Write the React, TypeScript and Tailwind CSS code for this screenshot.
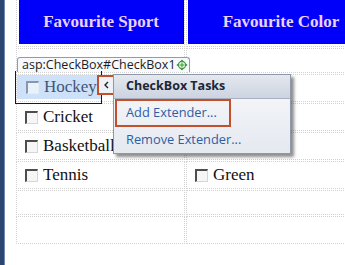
import React from "react";

const Check = ({ light }: { light?: boolean }) => (
  <span
    className={
      light
        ? "inline-block w-[13px] h-[13px] shrink-0 border-t-2 border-l-2 border-b border-r border-t-[#8796ad] border-l-[#8796ad] border-b-[#e3ecf7] border-r-[#e3ecf7] bg-[#e9f1fb]"
        : "inline-block w-[13px] h-[13px] shrink-0 border-t-2 border-l-2 border-b border-r border-t-[#4d4d4d] border-l-[#4d4d4d] border-b-[#d6d6d6] border-r-[#d6d6d6] bg-[#f6f6f6]"
    }
  />
);

const Cell = ({ children, h }: { children?: React.ReactNode; h: string }) => (
  <div className={`border border-dotted border-[#d2d2d2] flex items-center pl-[8px] gap-[5px] ${h}`}>{children}</div>
);

type Row = { h: string; a?: string; b?: string };
const rows: Row[] = [
  { h: "h-[25px]" },
  { h: "h-[28px]" },
  { h: "h-[28px]", a: "Cricket" },
  { h: "h-[28px]", a: "Basketball" },
  { h: "h-[28px]", a: "Tennis", b: "Green" },
  { h: "h-[25px]" },
  { h: "h-[28px]" },
];

export default function App() {
  return (
    <div className="w-[345px] h-[265px] overflow-hidden bg-white flex relative font-['Liberation_Serif',serif]">
      <div className="w-[5px] shrink-0 flex">
        <div className="w-[4px] bg-[#2c4572]" />
        <div className="w-[1px] bg-[#7088ad]" />
      </div>
      <div className="pl-[11px] shrink-0">
        <div className="w-[358px] flex flex-col gap-[1px]">
          {/* header */}
          <div className="grid grid-cols-[169px_188px] gap-x-[1px]">
            <div className="h-[47px] border-l border-r border-b border-dotted border-[#d2d2d2] pl-[2px] pb-[1px]">
              <div className="h-[44px] bg-[#0000fa] border-r border-[#000060] flex items-center justify-center text-[17px] font-bold text-[#ecd2fb]">
                Favourite Sport
              </div>
            </div>
            <div className="h-[47px] border-l border-b border-dotted border-[#d2d2d2] pl-[1px] pb-[1px]">
              <div className="h-[44px] bg-[#0000fa] flex items-center justify-center text-[17px] font-bold text-[#ecd2fb]">
                Favourite Color
              </div>
            </div>
          </div>
          {rows.map((r, i) => (
            <div key={i} className="grid grid-cols-[169px_188px] gap-x-[1px]">
              <Cell h={r.h}>
                {i === 1 ? (
                  <span className="flex items-center gap-[5px] h-[24px] -ml-[8px] pl-[9px] pr-[2px] w-[84px] self-start bg-[#cde1f8] text-[17px] text-[#41557a] overflow-hidden whitespace-nowrap">
                    <Check light />
                    Hockey
                  </span>
                ) : r.a ? (
                  <>
                    <Check />
                    <span className="text-[17px] text-[#111]">{r.a}</span>
                  </>
                ) : null}
              </Cell>
              <Cell h={r.h}>
                {r.b ? (
                  <>
                    <Check />
                    <span className="text-[17px] text-[#111]">{r.b}</span>
                  </>
                ) : null}
              </Cell>
            </div>
          ))}
        </div>
      </div>

      {/* control tag */}
      <div className="absolute left-[17px] top-[57px] w-[173px] h-[15px] rounded-t-[3px] border border-b-0 border-[#8d9bb3] bg-[#f7f9fd] flex items-center pl-[4px] font-['Open_Sans',sans-serif] text-[12.5px] leading-none text-[#1d1d1d] whitespace-nowrap">
        <span>asp:CheckBox#CheckBox1</span>
        <svg width="12" height="12" viewBox="0 0 12 12" className="ml-auto mr-[1px]">
          <circle cx="6" cy="6" r="3.6" fill="#e4f4e4" stroke="#3c9a3c" strokeWidth="1.1" />
          <path d="M6 3.6 V8.4 M3.6 6 H8.4" stroke="#3c9a3c" strokeWidth="1" />
          <path d="M6 0.4 L4.4 2.2 H7.6 Z M6 11.6 L4.4 9.8 H7.6 Z M0.4 6 L2.2 4.4 V7.6 Z M11.6 6 L9.8 4.4 V7.6 Z" fill="#3c9a3c" />
        </svg>
      </div>

      {/* selection frame */}
      <div className="absolute left-[15px] top-[71px] w-[87px] h-[33px] border border-t-0 border-[#1a1a1a] pointer-events-none" />

      {/* smart tag button */}
      <div className="absolute left-[97px] top-[75px] w-[19px] h-[20px] border-2 border-[#c1502d] bg-[#eef1f6] flex items-center justify-center">
        <svg width="7" height="8" viewBox="0 0 7 8">
          <path d="M5 1 L2 4 L5 7" fill="none" stroke="#222" strokeWidth="1.4" />
        </svg>
      </div>

      {/* tasks panel */}
      <div className="absolute left-[113px] top-[74px] w-[178px] h-[80px] border border-[#8e98a9] bg-gradient-to-b from-[#f8f9fb] to-[#e5e9f0] shadow-[3px_3px_3px_rgba(0,0,0,0.45)] font-['Open_Sans',sans-serif] flex flex-col">
        <div className="h-[24px] shrink-0 bg-gradient-to-b from-[#e4e8ef] to-[#cdd4e0] border-b border-[#a7b1c2] flex items-center pl-[12px] text-[12.5px] font-bold text-[#1c2636]">
          CheckBox Tasks
        </div>
        <div className="mx-[1px] h-[28px] shrink-0 border-2 border-[#c1502d] w-[116px] flex items-center pl-[9px] text-[12.8px] text-[#2c5ea5] whitespace-nowrap">
          Add Extender...
        </div>
        <div className="flex-1 flex items-center pl-[12px] text-[12.8px] text-[#2c5ea5] whitespace-nowrap">Remove Extender...</div>
      </div>
    </div>
  );
}
